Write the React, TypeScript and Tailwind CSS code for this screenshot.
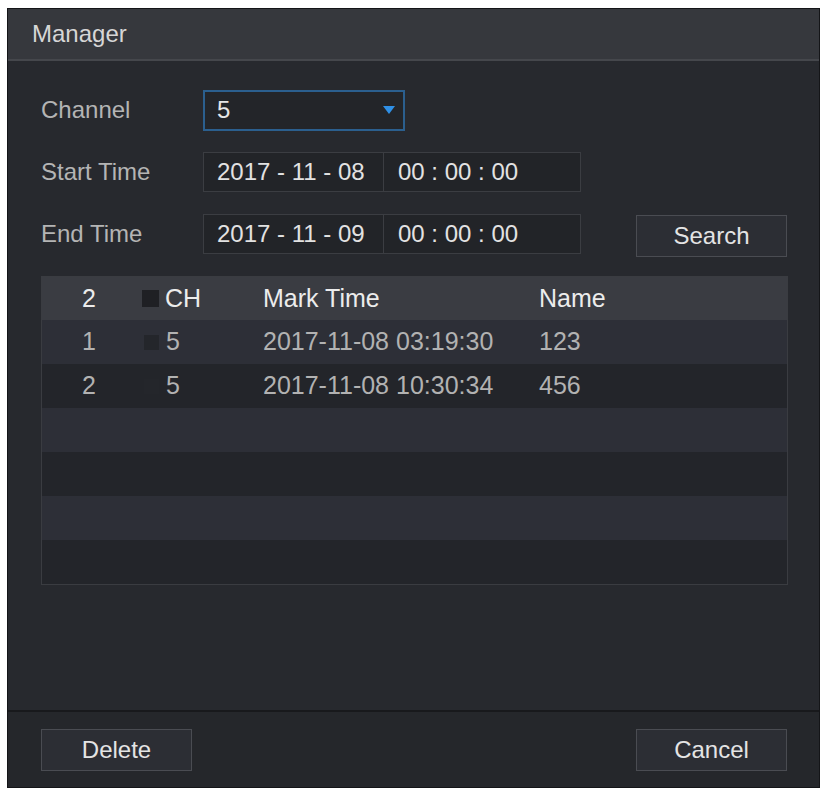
import React from 'react';

type Mark = { id: number; ch: string; time: string; name: string };

const marks: Mark[] = [
  { id: 1, ch: '5', time: '2017-11-08 03:19:30', name: '123' },
  { id: 2, ch: '5', time: '2017-11-08 10:30:34', name: '456' },
];

const font = { fontFamily: '"Liberation Sans", Arial, sans-serif' };

const DateTimeBox: React.FC<{ date: string }> = ({ date }) => (
  <div className="flex h-[40px] w-[378px] border border-[#3b3d42] bg-[#222428] text-[24px] text-[#e2e2e2]">
    <div className="flex w-[180px] items-center border-r border-[#3b3d42] pl-[13px] whitespace-pre">{date}</div>
    <div className="flex flex-1 items-center pl-[14px] whitespace-pre">00 : 00 : 00</div>
  </div>
);

const Button: React.FC<{ label: string }> = ({ label }) => (
  <button className="flex h-[42px] w-[151px] items-center justify-center border border-[#4a4c52] bg-[#2c2e34] text-[24px] text-[#e4e4e4]">
    {label}
  </button>
);

export default function App() {
  const rows = Array.from({ length: 6 }, (_, i) => marks[i] ?? null);

  return (
    <div className="h-[793px] w-[826px] bg-white pt-[8px] pl-[7px]" style={font}>
      <div className="flex h-[780px] w-[813px] flex-col border border-[#141518] bg-[#27292e]">
        {/* title */}
        <div className="flex h-[52px] items-center border-b-2 border-[#45474c] bg-[#36383d] pl-[24px] text-[24px] text-[#d6d6d6]">
          Manager
        </div>

        <div className="flex flex-1 flex-col px-[33px] pt-[29px]">
          {/* channel */}
          <div className="flex h-[40px] items-center">
            <span className="w-[162px] text-[24px] text-[#b4b4b4]">Channel</span>
            <div className="flex h-[41px] w-[202px] items-center justify-between border-2 border-[#2b5f8e] bg-[#232529] pl-[12px] pr-[8px] text-[24px] text-[#e6e6e6]">
              <span>5</span>
              <svg width="12" height="8" viewBox="0 0 12 8">
                <path d="M0 0 L12 0 L6 8 Z" fill="#2f90e6" />
              </svg>
            </div>
          </div>

          {/* start time */}
          <div className="mt-[22px] flex h-[40px] items-center">
            <span className="w-[162px] text-[24px] text-[#b4b4b4]">Start Time</span>
            <DateTimeBox date="2017 - 11 - 08" />
          </div>

          {/* end time */}
          <div className="mt-[22px] flex h-[40px] items-center">
            <span className="w-[162px] text-[24px] text-[#b4b4b4]">End Time</span>
            <DateTimeBox date="2017 - 11 - 09" />
            <div className="ml-auto mr-[-1px] mt-[4px]">
              <Button label="Search" />
            </div>
          </div>

          {/* table */}
          <div className="mt-[22px] w-[747px] border border-[#3a3c41] bg-[#25272c] text-[25px]">
            <div className="flex h-[43px] items-center bg-[#3a3c42] text-[#ececec]">
              <span className="w-[94px] text-center">2</span>
              <div className="flex w-[127px] items-center">
                <span className="ml-[6px] h-[17px] w-[17px] bg-[#1f2024]" />
                <span className="ml-[6px]">CH</span>
              </div>
              <span className="w-[276px]">Mark Time</span>
              <span>Name</span>
            </div>
            {rows.map((r, i) => (
              <div
                key={i}
                className={`flex h-[44px] items-center text-[#b2b2b2] ${i % 2 === 0 ? 'bg-[#2d2f37]' : 'bg-[#23252a]'}`}
              >
                {r && (
                  <>
                    <span className="w-[94px] text-center">{r.id}</span>
                    <div className="flex w-[127px] items-center">
                      <span className="ml-[8px] h-[15px] w-[15px] bg-[#24262b]" />
                      <span className="ml-[7px]">{r.ch}</span>
                    </div>
                    <span className="w-[276px]">{r.time}</span>
                    <span>{r.name}</span>
                  </>
                )}
              </div>
            ))}
          </div>
        </div>

        {/* footer */}
        <div className="flex h-[77px] items-center justify-between border-t-2 border-[#18191c] bg-[#25272b] pl-[33px] pr-[32px]">
          <Button label="Delete" />
          <Button label="Cancel" />
        </div>
      </div>
    </div>
  );
}
